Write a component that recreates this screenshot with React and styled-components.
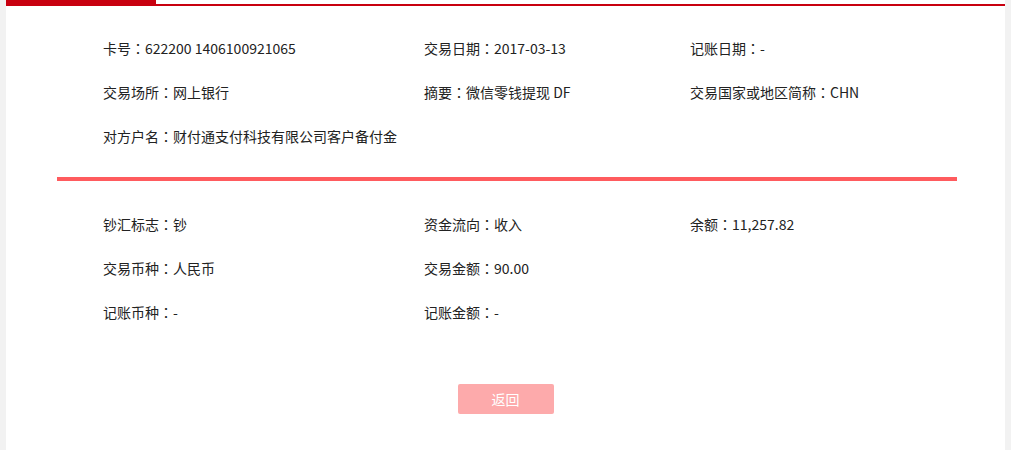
import styled, { createGlobalStyle } from 'styled-components'

const GlobalStyle = createGlobalStyle`
body {
  margin: 0;
  background: #f2f2f2;
  font-family: "Noto Sans CJK SC", "Noto Sans", sans-serif;
  color: #333;
}
`;

const Panel = styled.div`
margin: 0 6px;
min-height: 100vh;
background: #fff;
`;

const Header = styled.div`
height: 4px;
border-bottom: 2px solid #c8000f;
`;

const Tab = styled.div`
width: 150px;
height: 6px;
background: #c8000f;
`;

const Body = styled.div`
padding: 0 48px 0 51px;
`;

const Section = styled.div`
display: grid;
grid-template-columns: 321px 266px 1fr;
grid-auto-rows: 44px;
padding: ${props => props.top}px 0 0 46px;
margin-bottom: ${props => props.bottom}px;
`;

const Item = styled.div`
display: flex;
align-items: center;
font-size: 14px;
line-height: 20px;
white-space: nowrap;
color: #222;
`;

// centred full-width colon, as in the original font
const Colon = styled.span`
font-family: "Noto Sans CJK TC", "Noto Sans CJK SC", sans-serif;
`;

const Divider = styled.div`
height: 4px;
background: #ff5b5e;
`;

const Actions = styled.div`
display: flex;
justify-content: center;
padding-top: 50px;
`;

const BackButton = styled.button`
width: 96px;
height: 30px;
border: none;
border-radius: 2px;
background: #fdaaab;
color: #fff;
font-family: inherit;
font-size: 14px;
cursor: pointer;
`;

const top = [
    ['卡号', '622200 1406100921065'], ['交易日期', '2017-03-13'], ['记账日期', '-'],
    ['交易场所', '网上银行'], ['摘要', '微信零钱提现 DF'], ['交易国家或地区简称', 'CHN'],
    ['对方户名', '财付通支付科技有限公司客户备付金'],
];

const bottom = [
    ['钞汇标志', '钞'], ['资金流向', '收入'], ['余额', '11,257.82'],
    ['交易币种', '人民币'], ['交易金额', '90.00'], null,
    ['记账币种', '-'], ['记账金额', '-'],
];

const Field = ({ field }) => (
    <Item>
        {field && <>{field[0]}<Colon>：</Colon>{field[1]}</>}
    </Item>
);

const App = () => {
    return (
        <>
            <GlobalStyle />
            <Panel>
                <Header>
                    <Tab />
                </Header>
                <Body>
                    <Section top={20} bottom={19}>
                        {top.map((f, i) => <Field key={i} field={f} />)}
                    </Section>
                    <Divider />
                    <Section top={21} bottom={0}>
                        {bottom.map((f, i) => <Field key={i} field={f} />)}
                    </Section>
                </Body>
                <Actions>
                    <BackButton>返回</BackButton>
                </Actions>
            </Panel>
        </>
    )
}

export default App
